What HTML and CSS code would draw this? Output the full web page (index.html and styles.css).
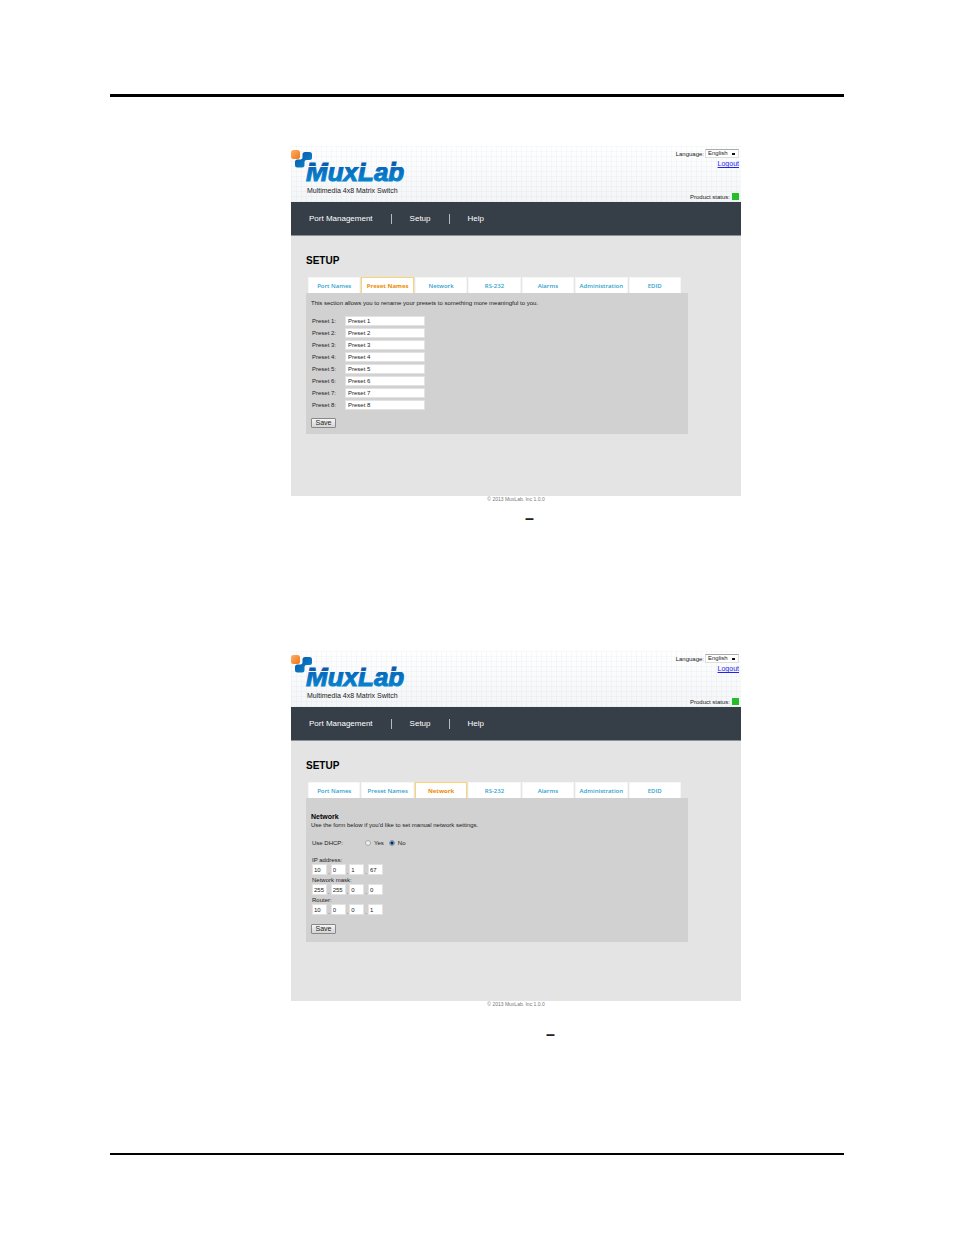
FILE: index.html
```
<!DOCTYPE html>
<html lang="en">
<head>
    <meta charset="UTF-8">
    <meta name="viewport" content="width=device-width, initial-scale=1.0">
    <title>MuxLab Setup</title>
    <link rel="stylesheet" href="styles.css">
</head>
<body>
    <main class="page">
        <section class="screen">
            <header class="header">
                <div class="brand">
                    <svg class="logo" viewBox="0 0 120 41" role="img" aria-label="MuxLab">
                        <defs>
                            <linearGradient id="blue" x1="0" y1="0" x2="1" y2="1">
                                <stop offset="0" stop-color="#0a4f9e"/>
                                <stop offset="1" stop-color="#0a8fd8"/>
                            </linearGradient>
                            <linearGradient id="orange" x1="0" y1="0" x2="1" y2="1">
                                <stop offset="0" stop-color="#ffb066"/>
                                <stop offset="1" stop-color="#f0761a"/>
                            </linearGradient>
                            <linearGradient id="word" gradientUnits="userSpaceOnUse" x1="0" y1="16" x2="0" y2="36">
                                <stop offset="0" stop-color="#0a57ab"/>
                                <stop offset=".2" stop-color="#0a5fb3"/>
                                <stop offset=".21" stop-color="#f4f8fb"/>
                                <stop offset=".26" stop-color="#f4f8fb"/>
                                <stop offset=".27" stop-color="#0768bb"/>
                                <stop offset="1" stop-color="#0885cf"/>
                            </linearGradient>
                        </defs>
                        <rect x="0" y="4" width="9" height="9" rx="2.5" fill="url(#orange)"/>
                        <path d="M14 6h4.500q2.500 0 2.500 2.500v3q0 2.500-2.500 2.500h-3q-2 0-2 2v3q0 2.500-2.500 2.500h-4.500q-2.500 0-2.500-2.500v-3q0-2.500 2.500-2.500h3q2 0 2-2v-3q0-2.500 2.500-2.500z" fill="url(#blue)"/>
                        <text class="word" x="15" y="35" fill="url(#word)" stroke="url(#word)">MuxLab</text>
                    </svg>
                    <p class="product">Multimedia 4x8 Matrix Switch</p>
                </div>
                <div class="tools">
                    <div class="language">
                        <label for="lang1">Language:</label>
                        <select id="lang1"><option>English</option></select>
                    </div>
                    <a class="logout" href="#">Logout</a>
                    <p class="status">Product status: <i></i></p>
                </div>
            </header>
            <nav class="nav">
                <a href="#">Port Management</a>
                <a href="#">Setup</a>
                <a href="#">Help</a>
            </nav>
            <div class="content">
                <h1>SETUP</h1>
                <div class="tabs">
                    <a href="#">Port Names</a>
                    <a class="active" href="#">Preset Names</a>
                    <a href="#">Network</a>
                    <a href="#">RS-232</a>
                    <a href="#">Alarms</a>
                    <a href="#">Administration</a>
                    <a href="#">EDID</a>
                </div>
                <form class="panel">
                    <p class="intro">This section allows you to rename your presets to something more meaningful to you.</p>
                    <div class="presets">
                        <label for="p1">Preset 1:</label><input id="p1" type="text" value="Preset 1">
                        <label for="p2">Preset 2:</label><input id="p2" type="text" value="Preset 2">
                        <label for="p3">Preset 3:</label><input id="p3" type="text" value="Preset 3">
                        <label for="p4">Preset 4:</label><input id="p4" type="text" value="Preset 4">
                        <label for="p5">Preset 5:</label><input id="p5" type="text" value="Preset 5">
                        <label for="p6">Preset 6:</label><input id="p6" type="text" value="Preset 6">
                        <label for="p7">Preset 7:</label><input id="p7" type="text" value="Preset 7">
                        <label for="p8">Preset 8:</label><input id="p8" type="text" value="Preset 8">
                    </div>
                    <button class="save" type="button">Save</button>
                </form>
            </div>
            <footer class="footer">© 2013 MuxLab. Inc 1.0.0</footer>
        </section>
        <p class="caption">–</p>

        <section class="screen">
            <header class="header">
                <div class="brand">
                    <svg class="logo" viewBox="0 0 120 41" role="img" aria-label="MuxLab">
                        <rect x="0" y="4" width="9" height="9" rx="2.5" fill="url(#orange)"/>
                        <path d="M14 6h4.500q2.500 0 2.500 2.500v3q0 2.500-2.500 2.500h-3q-2 0-2 2v3q0 2.500-2.500 2.500h-4.500q-2.500 0-2.500-2.500v-3q0-2.500 2.500-2.500h3q2 0 2-2v-3q0-2.500 2.500-2.500z" fill="url(#blue)"/>
                        <text class="word" x="15" y="35" fill="url(#word)" stroke="url(#word)">MuxLab</text>
                    </svg>
                    <p class="product">Multimedia 4x8 Matrix Switch</p>
                </div>
                <div class="tools">
                    <div class="language">
                        <label for="lang2">Language:</label>
                        <select id="lang2"><option>English</option></select>
                    </div>
                    <a class="logout" href="#">Logout</a>
                    <p class="status">Product status: <i></i></p>
                </div>
            </header>
            <nav class="nav">
                <a href="#">Port Management</a>
                <a href="#">Setup</a>
                <a href="#">Help</a>
            </nav>
            <div class="content">
                <h1>SETUP</h1>
                <div class="tabs">
                    <a href="#">Port Names</a>
                    <a href="#">Preset Names</a>
                    <a class="active" href="#">Network</a>
                    <a href="#">RS-232</a>
                    <a href="#">Alarms</a>
                    <a href="#">Administration</a>
                    <a href="#">EDID</a>
                </div>
                <form class="panel network">
                    <h2>Network</h2>
                    <p class="intro">Use the form below if you'd like to set manual network settings.</p>
                    <div class="dhcp" role="radiogroup" aria-labelledby="dhcp">
                        <span id="dhcp">Use DHCP:</span>
                        <label><input type="radio" name="dhcp"> Yes</label>
                        <label><input type="radio" name="dhcp" checked> No</label>
                    </div>
                    <label class="name" for="ip">IP address:</label>
                    <div class="octets">
                        <input id="ip" type="text" value="10">.<input type="text" aria-label="IP address 2" value="0">.<input type="text" aria-label="IP address 3" value="1">.<input type="text" aria-label="IP address 4" value="67">
                    </div>
                    <label class="name" for="mask">Network mask:</label>
                    <div class="octets">
                        <input id="mask" type="text" value="255">.<input type="text" aria-label="Network mask 2" value="255">.<input type="text" aria-label="Network mask 3" value="0">.<input type="text" aria-label="Network mask 4" value="0">
                    </div>
                    <label class="name" for="router">Router:</label>
                    <div class="octets">
                        <input id="router" type="text" value="10">.<input type="text" aria-label="Router 2" value="0">.<input type="text" aria-label="Router 3" value="0">.<input type="text" aria-label="Router 4" value="1">
                    </div>
                    <button class="save" type="button">Save</button>
                </form>
            </div>
            <footer class="footer">© 2013 MuxLab. Inc 1.0.0</footer>
        </section>
        <p class="caption second">–</p>
    </main>
</body>
</html>
```
FILE: styles.css
```
* {
    box-sizing: border-box;
}
body {
    margin: 0;
    background: #fff;
    color: #222;
    font-family: "Liberation Sans", Arial, sans-serif;
    font-size: 6px;
}
h1, h2, p {
    margin: 0;
}
input, select, button {
    font-family: inherit;
    color: inherit;
    margin: 0;
}
.page {
    margin: 94px 110px 0;
    padding: 49px 103px 96px 181px;
    border-top: 3px solid #000;
    border-bottom: 2px solid #000;
}
.header {
    display: flex;
    justify-content: space-between;
    height: 56px;
    background:
        repeating-linear-gradient(90deg, rgba(120, 150, 170, .05) 0 1px, transparent 1px 5px),
        repeating-linear-gradient(rgba(120, 150, 170, .05) 0 1px, transparent 1px 5px),
        linear-gradient(#fff, #f3f5f7);
}
.logo {
    display: block;
    width: 120px;
    height: 41px;
}
.word {
    font-family: "Liberation Sans", Arial, sans-serif;
    font-size: 26px;
    font-weight: bold;
    font-style: italic;
}
.product {
    padding-left: 16px;
    font-size: 7px;
    line-height: 8px;
}
.tools {
    display: flex;
    flex-direction: column;
    align-items: flex-end;
    padding: 3px 2px 2px 0;
}
.language {
    display: flex;
    align-items: center;
    gap: 1px;
}
.language select {
    appearance: none;
    width: 34px;
    height: 9px;
    padding: 0 2px;
    border: 1px solid #ddd;
    border-top-color: #aaa;
    border-radius: 0;
    background: #fff linear-gradient(#111, #111) no-repeat right 3px center / 3px 2px;
    font-size: 6px;
    line-height: 7px;
}
.logout {
    margin-top: 1px;
    color: #22e;
    font-size: 7px;
    line-height: 9px;
}
.status {
    display: flex;
    align-items: center;
    gap: 2px;
    margin-top: auto;
}
.status i {
    width: 7px;
    height: 7px;
    background: #27bd27;
}
.nav {
    display: flex;
    align-items: center;
    height: 34px;
    border-bottom: 1px solid #8a9299;
    background: #363e48;
}
.nav a {
    padding: 0 18px;
    border-right: 1px solid #b5babf;
    color: #fff;
    font-size: 8px;
    line-height: 10px;
    text-decoration: none;
}
.nav a:last-child {
    border: 0;
}
.content {
    height: 260px;
    padding: 19px 53px 0 15px;
    background: #e4e4e4;
}
h1 {
    color: #000;
    font-size: 10px;
    line-height: 12px;
}
.tabs {
    display: flex;
    gap: 1px;
    margin-top: 10px;
    padding: 0 7px 0 2px;
}
.tabs a {
    flex: 1 1 0;
    height: 16px;
    border: 1px solid #f6f6f6;
    border-bottom: 0;
    background: #fff;
    color: #2f9fce;
    font-family: "Open Sans", sans-serif;
    font-size: 6px;
    font-weight: 600;
    line-height: 16px;
    text-align: center;
    text-decoration: none;
    white-space: nowrap;
}
.tabs .active {
    border-color: #fad56f;
    color: #ee8b00;
    font-weight: 700;
}
.panel {
    height: 141px;
    padding: 6px 5px;
    background: #d1d1d1;
}
.intro {
    line-height: 9px;
}
.presets {
    display: grid;
    grid-template-columns: 32px 80px;
    grid-auto-rows: 10px;
    align-items: center;
    gap: 2px 1px;
    margin-top: 8px;
    padding-left: 1px;
}
input[type="text"] {
    width: 100%;
    height: 10px;
    padding: 0 2px;
    border: 1px solid #e2e2e2;
    background: #fff;
    font-size: 6px;
}
.save {
    display: block;
    width: 25px;
    height: 10px;
    margin-top: 8px;
    padding: 0;
    border: 1px solid #888;
    border-radius: 1px;
    background: linear-gradient(#f5f5f5, #d5d5d5);
    font-size: 7px;
    line-height: 8px;
}
.network {
    height: 144px;
    padding-top: 15px;
}
h2 {
    color: #000;
    font-size: 7px;
    line-height: 8px;
}
.network .intro {
    line-height: 8px;
}
.dhcp {
    display: flex;
    align-items: center;
    gap: 5px;
    height: 9px;
    margin: 9px 0 9px 1px;
}
.dhcp span {
    width: 48px;
}
.dhcp label {
    display: flex;
    align-items: center;
    gap: 3px;
}
.dhcp input {
    appearance: none;
    width: 6px;
    height: 6px;
    border: 1px solid #aaa;
    border-radius: 50%;
    background: #eee;
}
.dhcp input:checked {
    border-color: #8797a5;
    background: radial-gradient(#126 0 1px, #7bc 2px);
}
.name {
    display: block;
    padding-left: 1px;
    line-height: 8px;
}
.octets {
    display: flex;
    align-items: flex-end;
    gap: 1px;
    padding: 0 0 1px 1px;
}
.octets input[type="text"] {
    width: 15px;
    height: 11px;
    padding: 0 1px;
}
.footer {
    height: 6px;
    overflow: hidden;
    color: #777;
    font-size: 5px;
    line-height: 6px;
    text-align: center;
}
.caption {
    height: 149px;
    padding: 7px 0 0 234px;
    font-size: 16px;
    font-weight: bold;
    line-height: 20px;
}
.second {
    height: 50px;
    padding: 18px 0 0 255px;
}
```
